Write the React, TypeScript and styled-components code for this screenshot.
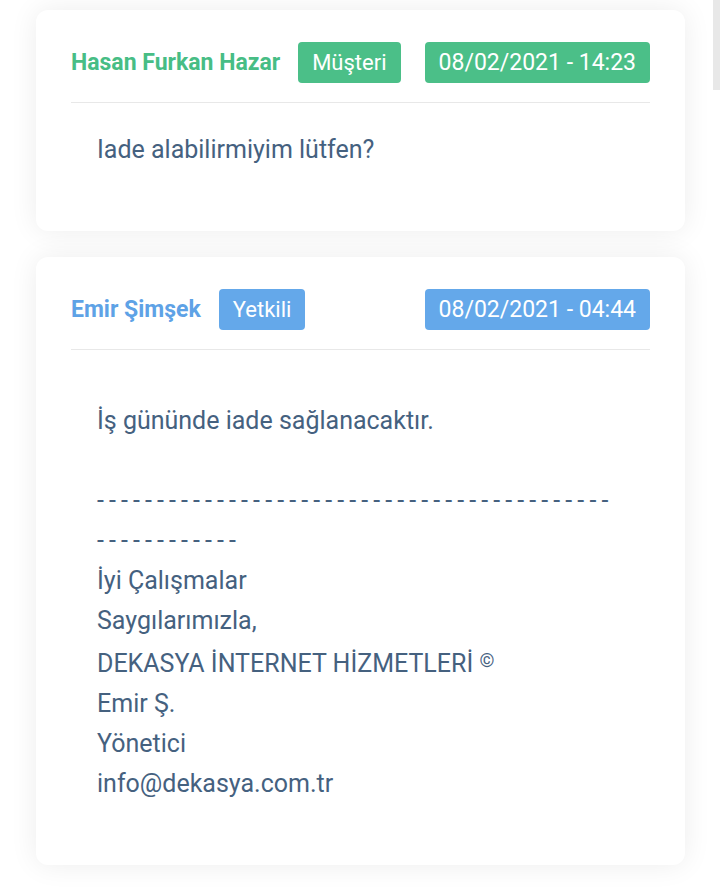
import React from 'react';
import styled, { createGlobalStyle } from 'styled-components';

const GlobalStyle = createGlobalStyle`
  body {
    margin: 0;
    background: #ffffff;
    font-family: Roboto, "Liberation Sans", sans-serif;
  }
`;

type Role = 'customer' | 'staff';

const palette: Record<Role, { text: string; badge: string }> = {
  customer: { text: '#47bd85', badge: '#4bbf88' },
  staff: { text: '#5ea2e6', badge: '#64a8ea' },
};

interface Message {
  author: string;
  role: Role;
  roleLabel: string;
  date: string;
  lines: string[];
  rich?: boolean;
}

const messages: Message[] = [
  {
    author: 'Hasan Furkan Hazar',
    role: 'customer',
    roleLabel: 'Müşteri',
    date: '08/02/2021 - 14:23',
    lines: ['Iade alabilirmiyim lütfen?'],
  },
  {
    author: 'Emir Şimşek',
    role: 'staff',
    roleLabel: 'Yetkili',
    date: '08/02/2021 - 04:44',
    rich: true,
    lines: [
      'İş gününde iade sağlanacaktır.',
      '',
      '-------------------------------------------------------',
      'İyi Çalışmalar',
      'Saygılarımızla,',
      'DEKASYA İNTERNET HİZMETLERİ ©',
      'Emir Ş.',
      'Yönetici',
      'info@dekasya.com.tr',
    ],
  },
];

const App: React.FC = () => {
  return (
    <>
      <GlobalStyle />
      <Page>
        {messages.map((m) => (
          <Card key={m.author}>
            <Header>
              <Author $role={m.role}>{m.author}</Author>
              <Badge $role={m.role}>{m.roleLabel}</Badge>
              <DateBadge $role={m.role}>{m.date}</DateBadge>
            </Header>
            <Body $rich={m.rich}>
              {m.lines.map((line, i) => {
                if (line === '') return <Line key={i}>&nbsp;</Line>;
                if (line.startsWith('---')) return <Dashes key={i}>{line}</Dashes>;
                if (line.endsWith('©'))
                  return (
                    <Line key={i}>
                      {line.slice(0, -1)}
                      <Copy>©</Copy>
                    </Line>
                  );
                return <Line key={i}>{line}</Line>;
              })}
            </Body>
          </Card>
        ))}
      </Page>
      <ScrollThumb />
    </>
  );
};

export default App;

const Page = styled.div`
  display: flex;
  flex-direction: column;
  gap: 26px;
  padding: 10px 35px 40px 36px;
`;

const Card = styled.div`
  background: #ffffff;
  border-radius: 12px;
  box-shadow: 0 0 28px rgba(0, 0, 0, 0.075);
  padding: 31px 35px 0;
`;

const Header = styled.div`
  display: flex;
  align-items: center;
  gap: 18px;
  height: 42px;
  padding-bottom: 19px;
  border-bottom: 1px solid #e8e8e8;
  white-space: nowrap;
`;

const Author = styled.span<{ $role: Role }>`
  font-size: 23px;
  font-weight: 700;
  color: ${(p) => palette[p.$role].text};
`;

const Badge = styled.span<{ $role: Role }>`
  display: inline-flex;
  align-items: center;
  flex-shrink: 0;
  height: 41px;
  padding: 0 14px;
  border-radius: 4px;
  font-size: 22px;
  color: #ffffff;
  background: ${(p) => palette[p.$role].badge};
`;

const DateBadge = styled(Badge)`
  margin-left: auto;
  font-size: 23px;
`;

const Body = styled.div<{ $rich?: boolean }>`
  padding: ${(p) => (p.$rich ? '51px' : '27px')} 30px 61px 26px;
  font-size: 25px;
  line-height: 40px;
  color: #45617f;
`;

const Line = styled.div`
  white-space: pre-wrap;
`;

const Dashes = styled.div`
  letter-spacing: 5.1px;
  word-break: break-all;
`;

const Copy = styled.span`
  font-size: 19px;
  vertical-align: 5px;
`;

const ScrollThumb = styled.div`
  position: fixed;
  top: 0;
  right: 0;
  width: 7px;
  height: 90px;
  background: #e8e8e8;
`;
